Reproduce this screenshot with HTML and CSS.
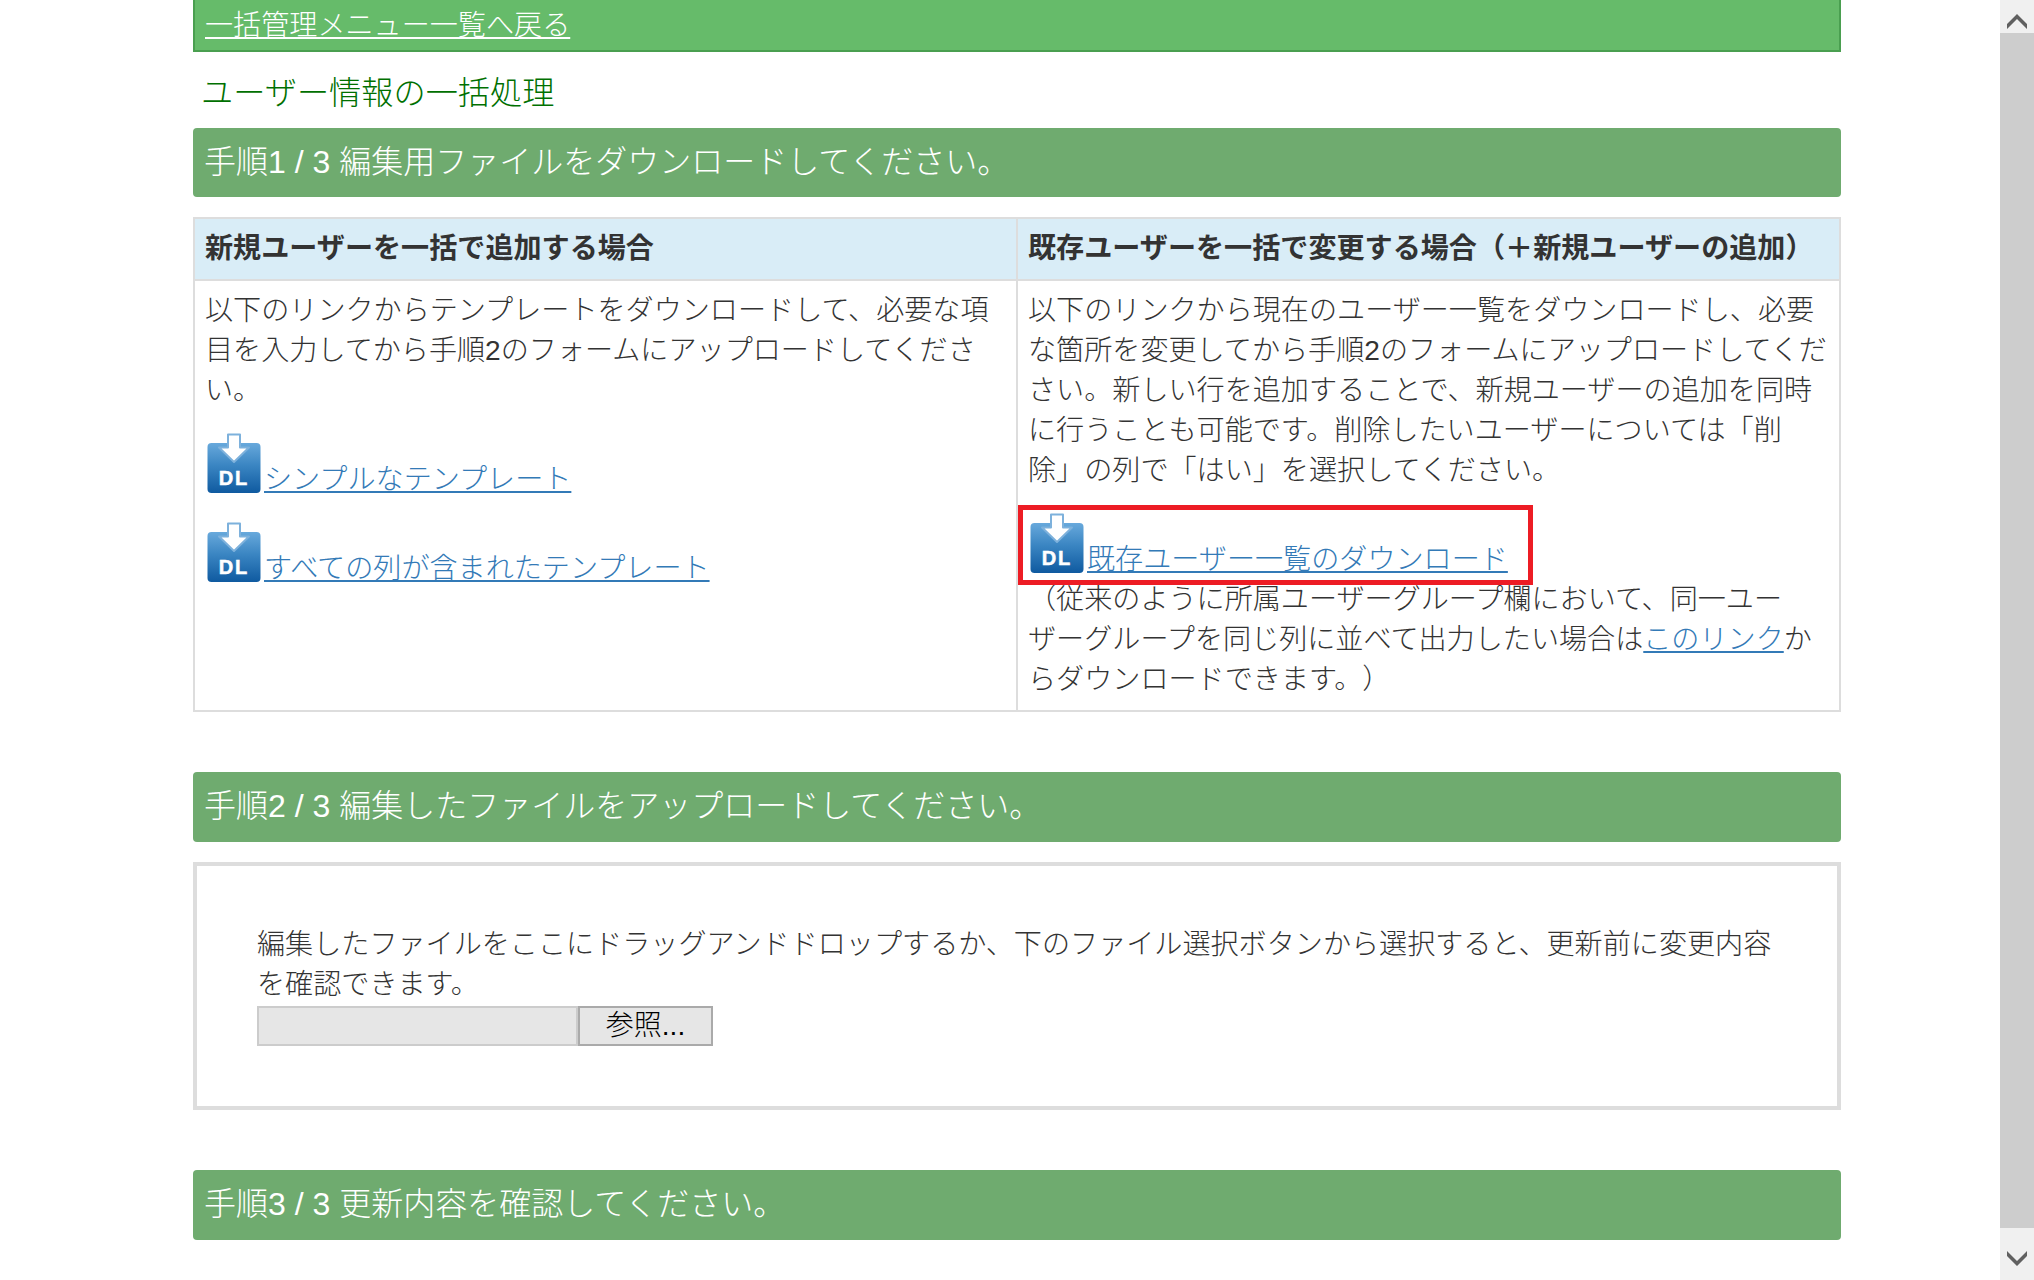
FILE: index.html
```html
<!DOCTYPE html>
<html lang="ja">
<head>
<meta charset="utf-8">
<title>ユーザー情報の一括処理</title>
<link rel="stylesheet" href="styles.css">
</head>
<body>
<svg class="defs" width="0" height="0" aria-hidden="true">
  <defs>
    <linearGradient id="dlg" x1="0" y1="0" x2="0" y2="1">
      <stop offset="0" stop-color="#68a9dc"/>
      <stop offset="0.45" stop-color="#3a85c2"/>
      <stop offset="1" stop-color="#0f5aa0"/>
    </linearGradient>
    <symbol id="dl" viewBox="0 -2 54 63">
      <rect x="0.5" y="10" width="53" height="50" rx="4" fill="url(#dlg)"/>
      <path d="M21 1.500h12v13h9L27 29 12 14.500h9z" fill="#fff" stroke="#7db1dc" stroke-width="2" stroke-linejoin="round"/>
      <text x="27" y="52" text-anchor="middle" class="dl-text">DL</text>
    </symbol>
  </defs>
</svg>
<div class="page">
  <main class="content">
    <div class="topbar"><a href="#">一括管理メニュー一覧へ戻る</a></div>
    <h1 class="title">ユーザー情報の一括処理</h1>

    <h2 class="step">手順1 / 3 編集用ファイルをダウンロードしてください。</h2>
    <table class="choices">
      <thead>
        <tr>
          <th>新規ユーザーを一括で追加する場合</th>
          <th>既存ユーザーを一括で変更する場合（＋新規ユーザーの追加）</th>
        </tr>
      </thead>
      <tbody>
        <tr>
          <td>
            <p>以下のリンクからテンプレートをダウンロードして、必要な項目を入力してから手順2のフォームにアップロードしてください。</p>
            <p><a href="#"><svg class="dl-icon"><use href="#dl"/></svg>シンプルなテンプレート</a></p>
            <p><a href="#"><svg class="dl-icon"><use href="#dl"/></svg>すべての列が含まれたテンプレート</a></p>
          </td>
          <td>
            <p>以下のリンクから現在のユーザー一覧をダウンロードし、必要な箇所を変更してから手順2のフォームにアップロードしてください。新しい行を追加することで、新規ユーザーの追加を同時に行うことも可能です。削除したいユーザーについては「削除」の列で「はい」を選択してください。</p>
            <div class="marked"><a href="#"><svg class="dl-icon"><use href="#dl"/></svg>既存ユーザー一覧のダウンロード</a></div>
            <div>（従来のように所属ユーザーグループ欄において、同一ユーザーグループを同じ列に並べて出力したい場合は<a href="#">このリンク</a>からダウンロードできます。）</div>
          </td>
        </tr>
      </tbody>
    </table>

    <h2 class="step step-next">手順2 / 3 編集したファイルをアップロードしてください。</h2>
    <section class="upload">
      <div>編集したファイルをここにドラッグアンドドロップするか、下のファイル選択ボタンから選択すると、更新前に変更内容を確認できます。</div>
      <div class="picker">
        <span class="picker-field"></span>
        <button class="picker-button" type="button">参照...</button>
      </div>
    </section>

    <h2 class="step step-next">手順3 / 3 更新内容を確認してください。</h2>
  </main>
  <aside class="scrollbar" aria-hidden="true">
    <div class="scroll-arrow">
      <svg width="20" height="15" viewBox="0 0 20 15"><path d="M0 10 10 0l10 10v5L10 5 0 15z" fill="#606060"/></svg>
    </div>
    <div class="scroll-thumb"></div>
    <div class="scroll-arrow scroll-arrow-down">
      <svg width="20" height="15" viewBox="0 0 20 15"><path d="M0 0 10 10 20 0v5L10 15 0 5z" fill="#606060"/></svg>
    </div>
  </aside>
</div>
</body>
</html>
```
FILE: styles.css
```css
*, *::after { box-sizing: border-box; }
html, body { margin: 0; height: 100%; overflow: hidden; background: #fff; }
body {
  font-family: "Liberation Sans", "Noto Sans CJK JP", sans-serif;
  font-size: 28.1px;
  line-height: 40px;
  font-weight: 300;
  color: #333;
  text-spacing-trim: space-all;
  line-break: strict;
}
.defs { position: absolute; }
a { color: #337ab7; text-decoration: underline; }

.page { display: flex; height: 1280px; }
.content { flex: 1; min-width: 0; padding: 0 159px 0 193px; }

.topbar {
  height: 52px;
  padding: 6px 10px 0;
  background: #66bb6a;
  border: solid #4a9f50;
  border-width: 0 2px 2px;
}
.topbar a { color: #fff; }

.title {
  margin: 19px 0 13px;
  padding-left: 8px;
  font-size: 32.2px;
  line-height: 44px;
  font-weight: 300;
  color: #007000;
}

.step {
  margin: 0 0 20px;
  height: 69px;
  padding: 12px 11px;
  background: #6fab6f;
  border-radius: 4px;
  font-size: 32px;
  line-height: 44px;
  font-weight: 300;
  color: #fff;
}
.step-next { margin-top: 60px; height: 70px; }

.choices {
  width: 100%;
  table-layout: fixed;
  border-collapse: collapse;
  border: 2px solid #ddd;
}
.choices th, .choices td {
  border: 2px solid #ddd;
  padding: 10px;
  text-align: left;
  vertical-align: top;
}
.choices th { background: #d9edf7; font-weight: 700; }
.choices p { margin: 0 0 20px; }
.choices td > :last-child { margin-bottom: 0; }

.dl-icon { width: 54px; height: 63px; margin: 0 3px 0 2px; vertical-align: -5px; }
.dl-text {
  font: 700 20px "Liberation Sans", sans-serif;
  letter-spacing: 2px;
  fill: #fff;
  stroke: #fff;
  stroke-width: .5px;
}

.marked { position: relative; }
.marked::after {
  content: "";
  position: absolute;
  left: -10px;
  top: -6px;
  width: 515px;
  height: 80px;
  border: 5px solid #ed1c24;
  pointer-events: none;
}

.upload {
  height: 248px;
  padding: 59px 60px 60px;
  border: 4px solid #ddd;
}
.picker { display: flex; margin-top: 1px; height: 40px; }
.picker-field {
  width: 321px;
  background: #e6e6e6;
  border: 2px solid #ccc;
}
.picker-button {
  width: 135px;
  padding: 0;
  background: #e6e6e6;
  border: 2px solid #aaa;
  border-radius: 0;
  font: 300 28px/32px "Liberation Sans", "Noto Sans CJK JP", sans-serif;
  color: #000;
}

.scrollbar {
  width: 34px;
  display: flex;
  flex-direction: column;
  background: #f0f0f0;
}
.scroll-thumb { flex: 1; background: #cdcdcd; }
.scroll-arrow {
  height: 33px;
  display: flex;
  justify-content: center;
  padding-top: 14px;
}
.scroll-arrow-down { height: 52px; padding-top: 23px; }
```
